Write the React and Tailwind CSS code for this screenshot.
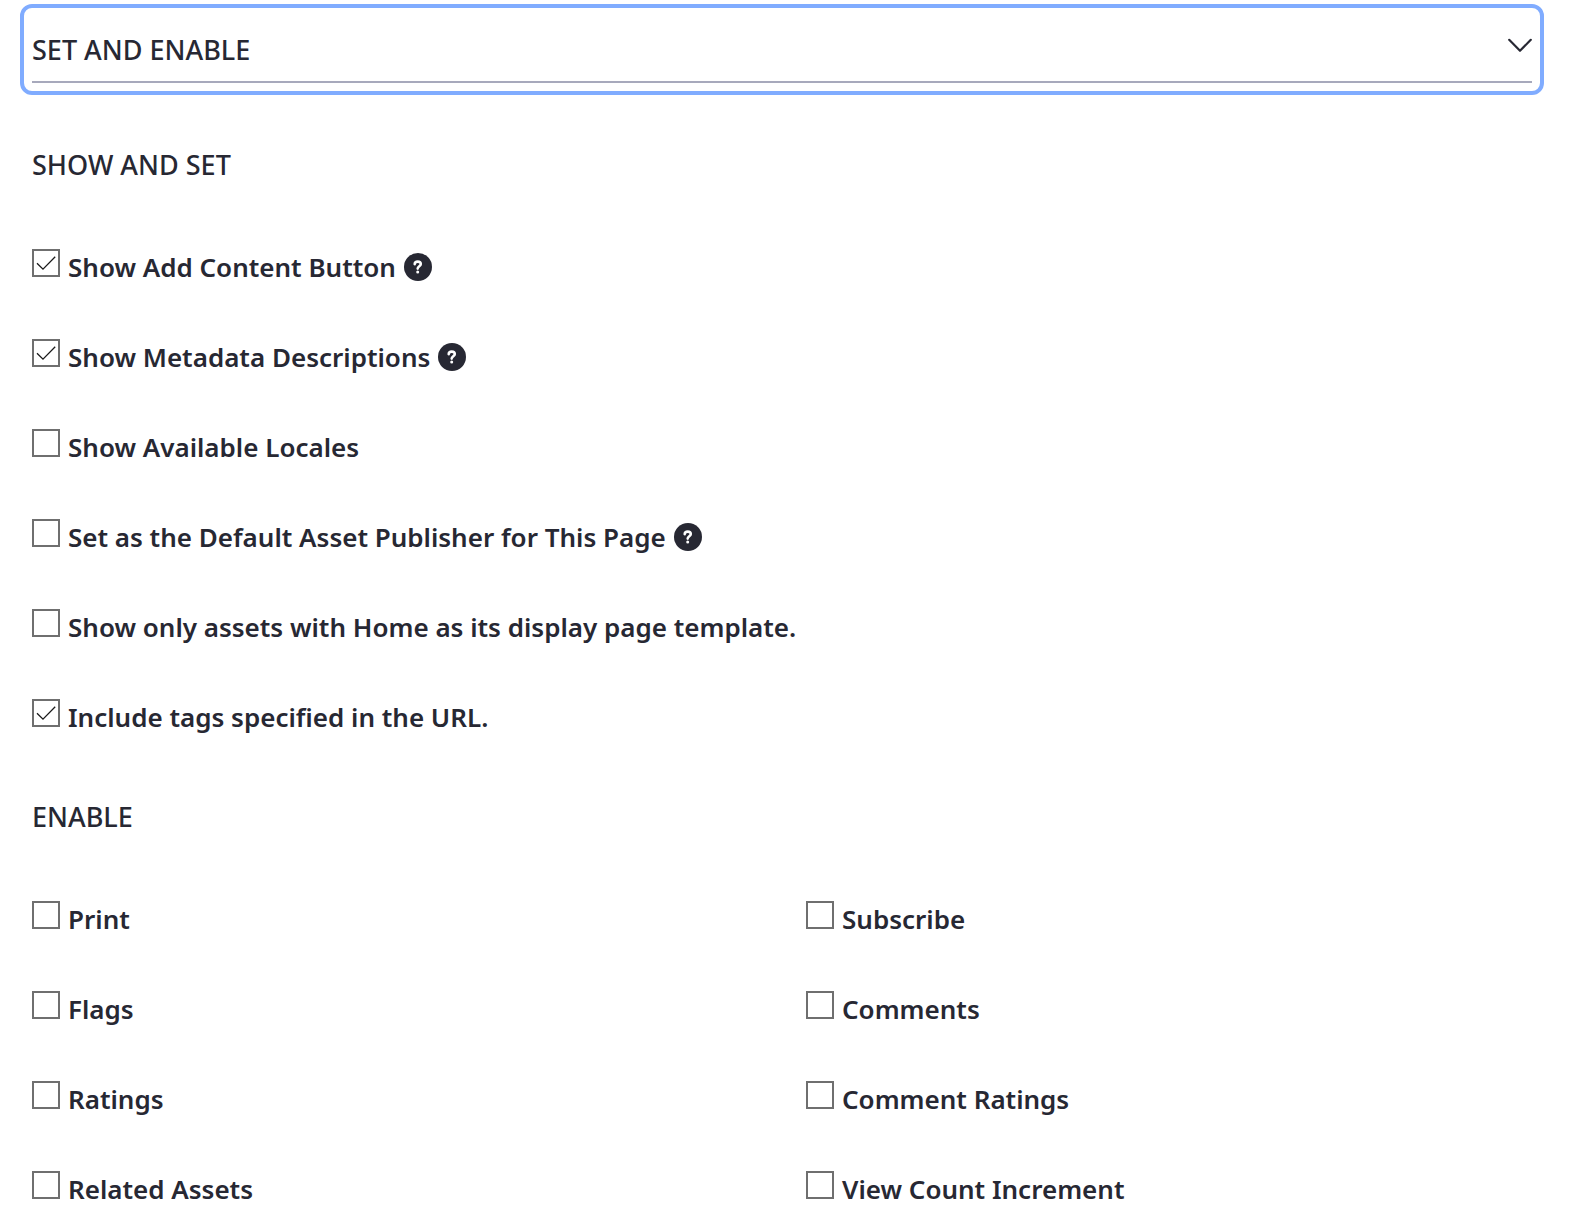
import { useState } from "react";

const DISPLAY_OPTIONS = [
  { id: "add-content", label: "Show Add Content Button", checked: true, help: true },
  { id: "metadata", label: "Show Metadata Descriptions", checked: true, help: true },
  { id: "locales", label: "Show Available Locales" },
  { id: "default-publisher", label: "Set as the Default Asset Publisher for This Page", help: true },
  { id: "home-template", label: "Show only assets with Home as its display page template." },
  { id: "url-tags", label: "Include tags specified in the URL.", checked: true },
];

const ENABLE_COLUMNS = [
  [
    { id: "print", label: "Print" },
    { id: "flags", label: "Flags" },
    { id: "ratings", label: "Ratings" },
    { id: "related-assets", label: "Related Assets" },
  ],
  [
    { id: "subscribe", label: "Subscribe" },
    { id: "comments", label: "Comments" },
    { id: "comment-ratings", label: "Comment Ratings" },
    { id: "view-count", label: "View Count Increment" },
  ],
];

function HelpIcon() {
  return (
    <svg viewBox="0 0 28 28" className="size-7" aria-hidden="true">
      <circle cx="14" cy="14" r="14" fill="#272833" />
      <path d="M10.7 11.1c.1-1.6 1.4-2.5 3-2.5 1.800 0 3.100.900 3.100 2.500 0 2.100-3.100 2.300-3.100 4.500" fill="none" stroke="#fff" strokeWidth="2.600" strokeLinecap="round" />
      <circle cx="13.700" cy="18.900" r="1.500" fill="#fff" />
    </svg>
  );
}

function Option({ id, label, checked = false, help = false }) {
  return (
    <div className="flex items-start gap-2">
      <label htmlFor={id} className="flex items-start gap-2">
        <span className="grid size-7 shrink-0">
          <input
            id={id}
            type="checkbox"
            defaultChecked={checked}
            className="peer col-start-1 row-start-1 size-7 appearance-none border-2 border-[#6f6f6f] bg-white"
          />
          <svg viewBox="0 0 28 28" className="pointer-events-none invisible col-start-1 row-start-1 size-7 peer-checked:visible" aria-hidden="true">
            <path d="M5 14.200l6 6L23.200 7.800" fill="none" stroke="#1a1a1a" strokeWidth="1.300" />
          </svg>
        </span>
        <span className="text-[26px] leading-9 font-semibold">{label}</span>
      </label>
      {help && (
        <button type="button" aria-label={`Help: ${label}`} className="mt-1 shrink-0 rounded-full">
          <HelpIcon />
        </button>
      )}
    </div>
  );
}

function Section({ title, children }) {
  return (
    <section className="flex flex-col gap-[66px]">
      <h3 className="text-[27px] leading-9 font-medium">{title}</h3>
      {children}
    </section>
  );
}

export default function App() {
  const [open, setOpen] = useState(true);

  return (
    <main className="min-h-screen overflow-x-hidden bg-white pt-1 pr-[33px] pb-4 pl-5 font-['Noto_Sans','Open_Sans',sans-serif] text-[#272833]">
      <h2>
        <button
          type="button"
          aria-expanded={open}
          onClick={() => setOpen(!open)}
          className="block w-full rounded-xl border-4 border-[#80acff] px-2 pt-6 pb-2 text-left"
        >
          <span className="flex items-start justify-between border-b-2 border-[#a7a9bc] pb-[13px]">
            <span className="text-[27px] leading-9 font-medium">SET AND ENABLE</span>
            <svg viewBox="0 0 24 28" className="h-7 w-6" aria-hidden="true">
              <path d="M1.200 7.800l10.800 11 10.800-11" fill="none" stroke="#272833" strokeWidth="2.200" strokeLinecap="round" strokeLinejoin="round" />
            </svg>
          </span>
        </button>
      </h2>

      {open && (
        <div className="flex flex-col gap-16 px-3 pt-[52px]">
          <Section title="SHOW AND SET">
            <div className="flex flex-col gap-[54px]">
              {DISPLAY_OPTIONS.map((option) => (
                <Option key={option.id} {...option} />
              ))}
            </div>
          </Section>
          <Section title="ENABLE">
            <div className="grid grid-cols-2 gap-x-12">
              {ENABLE_COLUMNS.map((column, index) => (
                <div key={index} className="flex flex-col gap-[54px]">
                  {column.map((option) => (
                    <Option key={option.id} {...option} />
                  ))}
                </div>
              ))}
            </div>
          </Section>
        </div>
      )}
    </main>
  );
}
